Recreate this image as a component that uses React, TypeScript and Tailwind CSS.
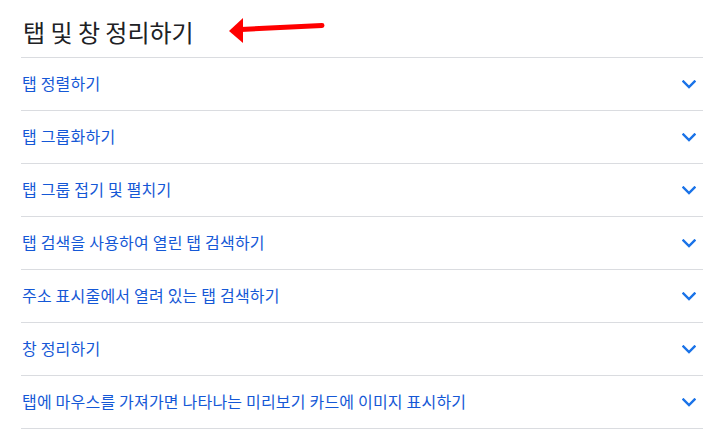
import React from "react";

const items = [
  "탭 정렬하기",
  "탭 그룹화하기",
  "탭 그룹 접기 및 펼치기",
  "탭 검색을 사용하여 열린 탭 검색하기",
  "주소 표시줄에서 열려 있는 탭 검색하기",
  "창 정리하기",
  "탭에 마우스를 가져가면 나타나는 미리보기 카드에 이미지 표시하기",
];

function Chevron() {
  return (
    <svg width="14" height="9" viewBox="0 0 14 9" className="text-[#1a73e8] mt-[1px]">
      <path d="M1.5 1.5 L7 7 L12.5 1.5" fill="none" stroke="currentColor" strokeWidth="2.4" strokeLinecap="square" />
    </svg>
  );
}

export default function App() {
  return (
    <div className="w-[713px] h-[444px] bg-white overflow-hidden" style={{ fontFamily: '"Noto Sans CJK KR", "Noto Sans", sans-serif' }}>
      <div className="pl-[21px] pr-[10px]">
        <div className="h-[57px] flex items-center relative">
          <h2 className="text-[24px] leading-none text-[#202124] pl-[2px] pt-[6px]">탭 및 창 정리하기</h2>
          <svg className="absolute left-[206px] top-[16px]" width="100" height="30" viewBox="0 0 100 30">
            <path d="M14 13.5 L95 9.5" stroke="#ff0000" strokeWidth="5" strokeLinecap="round" fill="none" />
            <path d="M2 15 L16 2 L16 27 Z" fill="#ff0000" />
          </svg>
        </div>
        <div className="border-t border-[#dadce0]">
          {items.map((t) => (
            <div key={t} className="h-[53px] flex items-center justify-between border-b border-[#dadce0] pr-[7px]">
              <span className="text-[16px] tracking-[0.2px] text-[#1558d6] pl-[1px] pb-[2px]">{t}</span>
              <Chevron />
            </div>
          ))}
        </div>
      </div>
    </div>
  );
}
